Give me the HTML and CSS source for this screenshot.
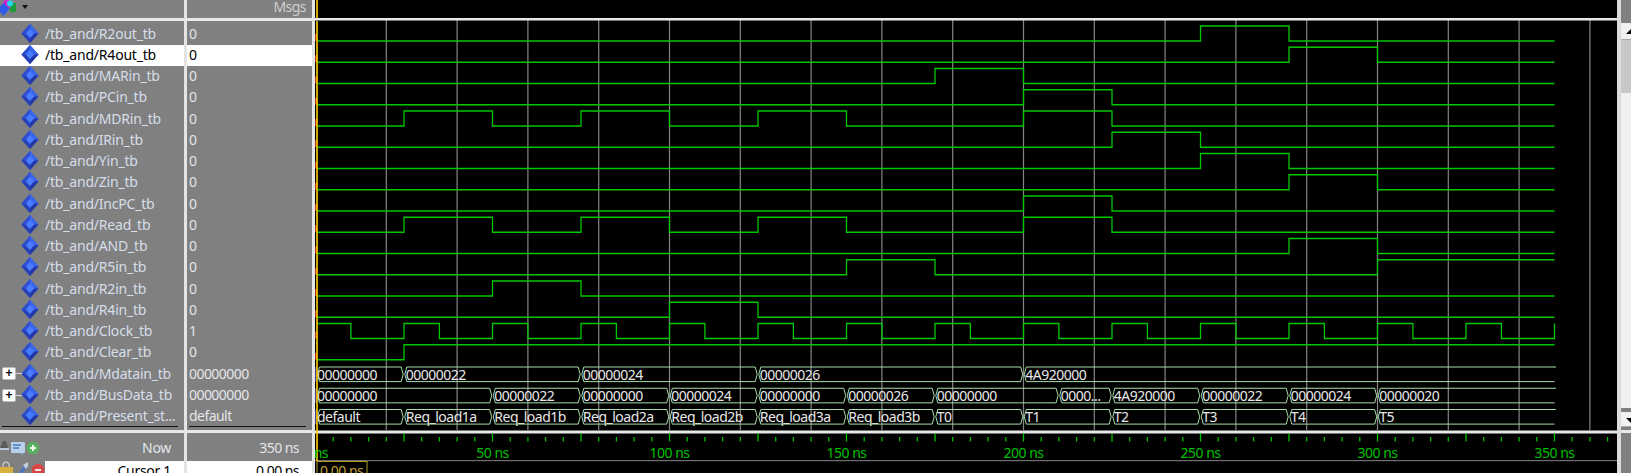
FILE: index.html
```html
<!DOCTYPE html>
<html lang="en">
<head>
    <meta charset="UTF-8">
    <title>Wave</title>
    <link rel="stylesheet" href="styles.css">
</head>
<body>
    <svg class="defs" width="0" height="0">
        <symbol id="diamond" viewBox="0 0 18 20">
            <polygon points="9,0 18,10 9,20 0,10" fill="#2b4fd8"/>
            <polygon points="9,0 18,10 13.5,10 9,5" fill="#3a66ee"/>
            <polygon points="9,0 0,10 4.5,10 9,5" fill="#2f50d0"/>
            <polygon points="9,5 13.5,10 9,15 4.5,10" fill="#4a7cff"/>
            <polygon points="0,10 4.5,10 9,15 9,20" fill="#2840b8"/>
            <polygon points="18,10 13.5,10 9,15 9,20" fill="#2238a8"/>
        </symbol>
    </svg>

    <div class="window">
        <div class="col names">
            <div class="head">
                <svg class="head-ico" width="32" height="18" viewBox="0 0 32 18">
                    <rect x="10" y="3" width="6" height="9" fill="#1f9a3a"/>
                    <circle cx="7" cy="4" r="4" fill="#d020d8"/>
                    <circle cx="10" cy="3.5" r="3" fill="#20d8e8"/>
                    <polygon points="3.5,3 9.5,9 3.5,16 -2.5,9" fill="#2f5ae8"/>
                    <polygon points="22,5 28,5 25,9" fill="#111"/>
                </svg>
            </div>
            <div class="rule"></div>
            <div class="list">
                <div class="row"><svg class="dia"><use href="#diamond"/></svg><span>/tb_and/R2out_tb</span></div>
                <div class="row on"><svg class="dia"><use href="#diamond"/></svg><span>/tb_and/R4out_tb</span></div>
                <div class="row"><svg class="dia"><use href="#diamond"/></svg><span>/tb_and/MARin_tb</span></div>
                <div class="row"><svg class="dia"><use href="#diamond"/></svg><span>/tb_and/PCin_tb</span></div>
                <div class="row"><svg class="dia"><use href="#diamond"/></svg><span>/tb_and/MDRin_tb</span></div>
                <div class="row"><svg class="dia"><use href="#diamond"/></svg><span>/tb_and/IRin_tb</span></div>
                <div class="row"><svg class="dia"><use href="#diamond"/></svg><span>/tb_and/Yin_tb</span></div>
                <div class="row"><svg class="dia"><use href="#diamond"/></svg><span>/tb_and/Zin_tb</span></div>
                <div class="row"><svg class="dia"><use href="#diamond"/></svg><span>/tb_and/IncPC_tb</span></div>
                <div class="row"><svg class="dia"><use href="#diamond"/></svg><span>/tb_and/Read_tb</span></div>
                <div class="row"><svg class="dia"><use href="#diamond"/></svg><span>/tb_and/AND_tb</span></div>
                <div class="row"><svg class="dia"><use href="#diamond"/></svg><span>/tb_and/R5in_tb</span></div>
                <div class="row"><svg class="dia"><use href="#diamond"/></svg><span>/tb_and/R2in_tb</span></div>
                <div class="row"><svg class="dia"><use href="#diamond"/></svg><span>/tb_and/R4in_tb</span></div>
                <div class="row"><svg class="dia"><use href="#diamond"/></svg><span>/tb_and/Clock_tb</span></div>
                <div class="row"><svg class="dia"><use href="#diamond"/></svg><span>/tb_and/Clear_tb</span></div>
                <div class="row"><i class="plus">+</i><svg class="dia"><use href="#diamond"/></svg><span>/tb_and/Mdatain_tb</span></div>
                <div class="row"><i class="plus">+</i><svg class="dia"><use href="#diamond"/></svg><span>/tb_and/BusData_tb</span></div>
                <div class="row"><svg class="dia"><use href="#diamond"/></svg><span>/tb_and/Present_st...</span></div>
            </div>
            <div class="rule"></div>
            <div class="foot">
                <div class="now">
                    <svg class="foot-ico" width="45" height="27" viewBox="0 0 45 27">
                        <path d="M0 14 L3 7 L6 7 L8 14 Z" fill="#5a5a5a"/>
                        <path d="M0 15 H9" stroke="#b8c8d8" stroke-width="2"/>
                        <rect x="11" y="8" width="14" height="11" rx="1" fill="#b8d0ea"/>
                        <path d="M13 11 H21 M13 14 H19" stroke="#4a78b8" stroke-width="1.5"/>
                        <path d="M20 19 L24 19 L22 21 Z" fill="#7aa0d0"/>
                        <circle cx="33" cy="14" r="6.3" fill="#58b060"/>
                        <path d="M30 14 H36 M33 11 V17" stroke="#e8f8e8" stroke-width="2"/>
                    </svg>
                    <span>Now</span>
                </div>
                <div class="cursor">
                    <svg class="foot-ico" width="45" height="20" viewBox="0 0 45 20">
                        <path d="M3 6 V3 Q6 -1 9 3 V6" stroke="#c0c0c0" stroke-width="1.5" fill="none"/>
                        <rect x="0" y="6" width="13" height="9" fill="#d8b040"/>
                        <path d="M19 14 L25 6" stroke="#4a78c0" stroke-width="3"/>
                        <path d="M23 4 L28 1 L28 5 L26 8 Z" fill="#c0d0e0"/>
                        <circle cx="38" cy="9" r="6.3" fill="#d84848"/>
                        <path d="M35 9 H41" stroke="#f8e0e0" stroke-width="2"/>
                    </svg>
                    <span class="cell">Cursor 1</span>
                </div>
            </div>
        </div>

        <div class="col vals">
            <div class="head msgs">Msgs</div>
            <div class="rule"></div>
            <div class="list">
                <div class="row">0</div>
                <div class="row on">0</div>
                <div class="row">0</div>
                <div class="row">0</div>
                <div class="row">0</div>
                <div class="row">0</div>
                <div class="row">0</div>
                <div class="row">0</div>
                <div class="row">0</div>
                <div class="row">0</div>
                <div class="row">0</div>
                <div class="row">0</div>
                <div class="row">0</div>
                <div class="row">0</div>
                <div class="row">1</div>
                <div class="row">0</div>
                <div class="row">00000000</div>
                <div class="row">00000000</div>
                <div class="row">default</div>
            </div>
            <div class="rule"></div>
            <div class="foot">
                <div class="now"><span>350 ns</span></div>
                <div class="cursor"><span class="cell">0.00 ns</span></div>
            </div>
        </div>

        <svg id="wave" class="wave" viewBox="315 0 1302 473"></svg>

        <div class="scroll">
            <div class="sb-top"></div>
            <div class="sb-btn"><svg width="10" height="17"><polygon points="10,6 10,11 5,11" fill="#000"/></svg></div>
            <div class="sb-track"></div>
            <div class="sb-thumb"></div>
            <div class="sb-btn sb-down"><svg width="10" height="15"><polygon points="5,6 10,6 10,11" fill="#000"/></svg></div>
            <div class="sb-end"></div>
        </div>
    </div>

    <script src="wave.js"></script>
</body>
</html>
```

FILE: styles.css
```css
body {
    margin: 0;
    background-color: #808080;
    font-family: "Noto Sans", "Liberation Sans", sans-serif;
    font-size: 14px;
    letter-spacing: -0.55px;
    overflow: hidden;
}
.defs {
    position: absolute;
}
.window {
    display: flex;
    width: 1631px;
    height: 473px;
    overflow: hidden;
}
.col {
    display: flex;
    flex-direction: column;
    color: #e2e6ea;
}
.names {
    width: 184px;
    border-right: 3px solid #e4e4e4;
    letter-spacing: -0.2px;
    color: #d6deea;
}
.names .foot {
    letter-spacing: -0.3px;
    color: #e2e6ea;
}
.vals {
    width: 125px;
    border-right: 3px solid #e4e4e4;
}
.head {
    height: 18px;
    line-height: 13px;
    flex: none;
}
.head-ico {
    display: block;
}
.msgs {
    padding-right: 6px;
    text-align: right;
    color: #cfcfcf;
}
.rule {
    height: 3px;
    background-color: #e8e8e8;
    flex: none;
}
.list {
    height: 409px;
    padding-top: 2.4px;
    box-sizing: border-box;
    position: relative;
    flex: none;
}
.list::after {
    content: "";
    position: absolute;
    left: 2px;
    right: 6px;
    bottom: 3px;
    height: 1px;
    background-color: #111;
}
.row {
    height: 21.25px;
    padding-bottom: 2px;
    box-sizing: border-box;
    display: flex;
    align-items: center;
    white-space: nowrap;
}
.names .row {
    padding-left: 21px;
    gap: 6px;
    position: relative;
}
.vals .row {
    padding-left: 2px;
}
.row.on {
    background-color: #fff;
    color: #000;
}
.dia {
    width: 18px;
    height: 19px;
    flex: none;
}
.plus {
    position: absolute;
    left: 2px;
    top: 4px;
    width: 12px;
    height: 11px;
    background-color: #fff;
    border: 1px solid #bbb;
    border-radius: 2px;
    color: #000;
    font: bold 12px/10px "Liberation Sans", sans-serif;
    text-align: center;
}
.plus::after {
    content: "";
    position: absolute;
    left: 13px;
    top: 5px;
    width: 6px;
    height: 1px;
    background-color: #d8d8d8;
}
.foot {
    flex: 1;
    min-height: 0;
    overflow: hidden;
}
.now {
    height: 28px;
    display: flex;
    align-items: center;
    justify-content: space-between;
}
.vals .now {
    justify-content: flex-end;
}
.now span {
    padding-right: 13px;
}
.cursor {
    height: 20px;
    line-height: 20px;
    display: flex;
}
.foot-ico {
    flex: none;
}
.cell {
    flex: 1;
    background-color: #fff;
    color: #000;
    text-align: right;
    padding-right: 13px;
}
.wave {
    width: 1302px;
    height: 473px;
    flex: none;
    background-color: #000;
}
.wave text {
    font-family: "Noto Sans", "Liberation Sans", sans-serif;
    font-size: 14px;
    letter-spacing: -0.5px;
}
.scroll {
    width: 10px;
    flex: none;
    border-left: 4px solid #dcdcdc;
    display: flex;
    flex-direction: column;
}
.sb-top {
    height: 22.5px;
}
.sb-btn {
    height: 17.5px;
    background-color: #f0f0f0;
    border-bottom: 1px solid #aaa;
    box-sizing: border-box;
}
.sb-btn svg {
    display: block;
}
.sb-track {
    height: 53px;
    background-color: #c8c8c8;
}
.sb-thumb {
    height: 315px;
    background-color: #f0f0f0;
}
.sb-down {
    margin-top: 3.5px;
    height: 15.5px;
}
.sb-end {
    flex: 1;
    margin-top: 3px;
    border-top: 3px solid #e8e8e8;
}
```

FILE: wave.js
```js
// waveform canvas, times are in ns
var X0 = 315.5, PX = 3.54, Y0 = 41, PITCH = 21.25, HIGH = 15;
var END = 350;
var svg = document.getElementById("wave");

function x(t) {
    return X0 + PX * t;
}

function add(tag, attrs, text) {
    var el = document.createElementNS("http://www.w3.org/2000/svg", tag);
    for (var k in attrs) el.setAttribute(k, attrs[k]);
    if (text) el.textContent = text;
    svg.appendChild(el);
    return el;
}

var cpu = [[25, 50], [75, 100], [125, 150], [200, 225]];
var clock = [];
for (var t = 0; t <= END; t += 25) clock.push([t, t + 10]);

// one list of high pulses per signal row
var signals = [
    [[250, 275]],
    [[275, 300]],
    [[175, 200]],
    [[200, 225]],
    cpu,
    [[225, 250]],
    [[250, 275]],
    [[275, 300]],
    [[200, 225]],
    cpu,
    [[275, 300]],
    [[150, 175], [300, END]],
    [[50, 75]],
    [[100, 125]],
    clock,
    [[25, END]]
];

var buses = [
    [[0, "00000000"], [25, "00000022"], [75, "00000024"], [125, "00000026"], [200, "4A920000"], [END]],
    [[0, "00000000"], [50, "00000022"], [75, "00000000"], [100, "00000024"], [125, "00000000"],
     [150, "00000026"], [175, "00000000"], [210, "0000..."], [225, "4A920000"], [250, "00000022"],
     [275, "00000024"], [300, "00000020"], [END]],
    [[0, "default"], [25, "Req_load1a"], [50, "Req_load1b"], [75, "Req_load2a"], [100, "Req_load2b"],
     [125, "Req_load3a"], [150, "Req_load3b"], [175, "T0"], [200, "T1"], [225, "T2"], [250, "T3"],
     [275, "T4"], [300, "T5"], [END]]
];

// grid, every 20 ns
for (var g = 20; g <= 360; g += 20) {
    add("line", { x1: x(g), x2: x(g), y1: 20, y2: 430, stroke: "#858585", "stroke-width": 1.2 });
}

// top and bottom rules of the wave pane
add("rect", { x: 315, y: 18, width: 1302, height: 2.5, fill: "#e8e8e8" });
add("rect", { x: 315, y: 430.5, width: 1302, height: 3, fill: "#e8e8e8" });
add("rect", { x: 315, y: 460, width: 1302, height: 1.2, fill: "#707070" });

// single bit rows
signals.forEach(function (pulses, i) {
    var low = Y0 + PITCH * i, up = low - HIGH;
    var d = "M" + (pulses[0][0] == 0 ? x(0) + 2 + " " + up : x(0) + 2 + " " + low);
    pulses.forEach(function (p) {
        if (p[0] > 0) d += "H" + x(p[0]) + "V" + up;
        if (p[1] < END) d += "H" + x(p[1]) + "V" + low;
        else d += "H" + x(END);
    });
    if (pulses[pulses.length - 1][1] < END) d += "H" + x(END);
    add("path", { d: d, fill: "none", stroke: "#00c800", "stroke-width": 1.3 });
    add("rect", { x: 315.3, y: low - 7, width: 1.4, height: 7, fill: "#ff5020" });
});

// bus rows
buses.forEach(function (segs, i) {
    var low = Y0 + PITCH * (16 + i) + 0.6, up = low - HIGH + 0.4, mid = (low + up) / 2;
    for (var s = 0; s < segs.length - 1; s++) {
        var a = x(segs[s][0]) + (s == 0 ? 2 : 0.8), b = x(segs[s + 1][0]) - 0.8;
        if (segs[s + 1][0] == END) b = x(END) + 3;
        var clip = "seg" + i + "_" + s;
        var cp = add("clipPath", { id: clip });
        var r = document.createElementNS("http://www.w3.org/2000/svg", "rect");
        r.setAttribute("x", a - 1); r.setAttribute("y", up - 2);
        r.setAttribute("width", b - a + 1); r.setAttribute("height", 22);
        cp.appendChild(r);
        add("text", { x: a + (s == 0 ? -0.5 : 1), y: low - 2, fill: "#e8e8e8", "clip-path": "url(#" + clip + ")" }, segs[s][1]);
        var d = "M" + a + " " + mid + "L" + (a + 2) + " " + up + "H" + (b - 2);
        if (segs[s + 1][0] == END) d += "H" + x(END) + "M" + x(END) + " " + low + "H" + (a + 2) + "L" + a + " " + mid;
        else d += "L" + b + " " + mid + "L" + (b - 2) + " " + low + "H" + (a + 2) + "Z";
        add("path", { d: d, fill: "none", stroke: "#a8dca8", "stroke-width": 1 });
    }
    add("rect", { x: 315.3, y: up, width: 1.4, height: low - up, fill: "#7058c8" });
});

// cursor line
add("rect", { x: 316.2, y: 0, width: 1.6, height: 18, fill: "#ffd000" });
add("rect", { x: 316.2, y: 21, width: 1.6, height: 440, fill: "#ffd000" });

// time axis
for (var k = 5; k <= 365; k += 5) {
    var major = k % 25 == 0;
    add("line", { x1: x(k), x2: x(k), y1: major ? 433.5 : 437, y2: 441.5, stroke: "#00c000", "stroke-width": 1.3 });
}
for (var n = 0; n <= END; n += 50) {
    add("text", { x: x(n), y: 458, fill: "#00c000", "text-anchor": "middle" }, n + " ns");
}

// cursor flag
add("rect", { x: 317, y: 461.5, width: 50, height: 16, fill: "none", stroke: "#b09a20" });
add("text", { x: 320, y: 476, fill: "#c0a030" }, "0.00 ns");
```
